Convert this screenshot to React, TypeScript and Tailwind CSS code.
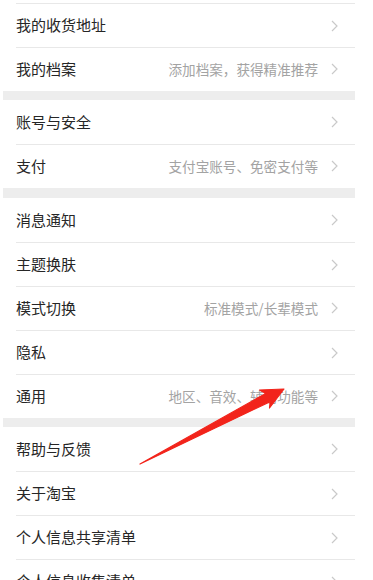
import React from "react";

// 设置页列表项
type Item = { label: string; hint?: string; first?: boolean };

const sections: Item[][] = [
  [
    { label: "我的收货地址" },
    { label: "我的档案", hint: "添加档案，获得精准推荐" },
  ],
  [
    { label: "账号与安全", first: true },
    { label: "支付", hint: "支付宝账号、免密支付等" },
  ],
  [
    { label: "消息通知", first: true },
    { label: "主题换肤" },
    { label: "模式切换", hint: "标准模式/长辈模式" },
    { label: "隐私" },
    { label: "通用", hint: "地区、音效、辅助功能等" },
  ],
  [
    { label: "帮助与反馈", first: true },
    { label: "关于淘宝" },
    { label: "个人信息共享清单" },
    { label: "个人信息收集清单" },
  ],
];

const gaps = ["h-[9px]", "h-[10px]", "h-[9px]"];

function Chevron() {
  return (
    <svg width="7" height="12" viewBox="0 0 7 12" className="shrink-0">
      <path d="M1 1l5 5-5 5" fill="none" stroke="#c9c9c9" strokeWidth="1.2" />
    </svg>
  );
}

function Row({ item }: { item: Item }) {
  return (
    <div className="pl-[13px] bg-white">
      <div
        className={`h-[44px] flex items-center justify-between pr-[17px] ${
          item.first ? "" : "border-t border-[#e8e8e8]"
        }`}
      >
        <span className="text-[15px] text-[#262626]">{item.label}</span>
        <div className="flex items-center gap-[13px]">
          {item.hint && (
            <span className="text-[13.6px] text-[#a3a3a3]">{item.hint}</span>
          )}
          <Chevron />
        </div>
      </div>
    </div>
  );
}

export default function App() {
  return (
    <div
      className="relative w-[373px] h-[580px] overflow-hidden bg-white"
      style={{ fontFamily: '"Noto Sans CJK SC", "Noto Sans", sans-serif' }}
    >
      <div className="ml-[3px] w-[352px]">
        <div className="h-[3px]" />
        {sections.map((sec, i) => (
          <React.Fragment key={i}>
            {sec.map((item) => (
              <Row key={item.label} item={item} />
            ))}
            {i < gaps.length && <div className={`${gaps[i]} bg-[#ededed]`} />}
          </React.Fragment>
        ))}
      </div>

      {/* 红色箭头标注 */}
      <svg
        className="absolute left-0 top-0 pointer-events-none"
        width="373"
        height="580"
        viewBox="0 0 373 580"
      >
        <polygon
          points="140,464 265.8,393.4 259.5,390 284,389 269.5,408 270.2,401.6"
          fill="#f2241b"
          stroke="#f2241b"
          strokeWidth="1.2"
          strokeLinejoin="round"
        />
      </svg>
    </div>
  );
}
